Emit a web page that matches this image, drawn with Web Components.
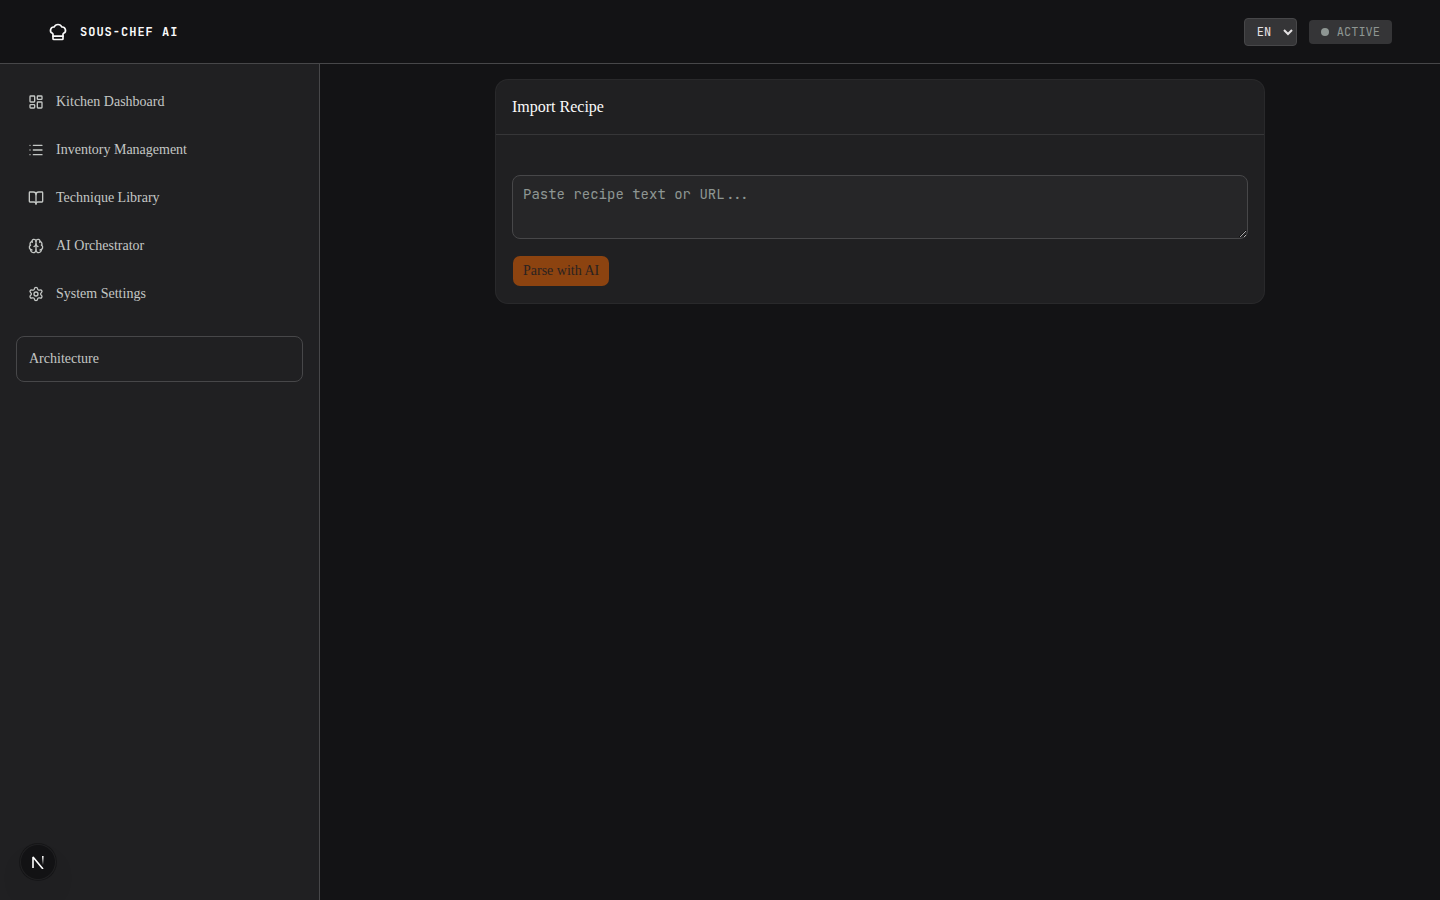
<!DOCTYPE html>
<html lang="en">
<head>
<meta charset="utf-8">
<meta name="viewport" content="width=device-width, initial-scale=1">
<title>Sous-Chef AI</title>
<style>
:root {
    --bg: #131315;
    --bg-panel: #202022;
    --bg-input: #262628;
    --bg-chip: #353537;
    --line: #474749;
    --line-soft: #363638;
    --ring: #29292b;
    --text: #fafafa;
    --text-soft: #e5e2e4;
    --text-secondary: #c4c7c5;
    --text-muted: #8e9693;
    --accent: #8c4310;
    --serif: "Liberation Serif", "Times New Roman", serif;
    --mono: "JetBrains Mono", "DejaVu Sans Mono", monospace;
    color-scheme: dark;
}
body {
    margin: 0;
    background: var(--bg);
    color: var(--text);
    font: 14px/20px var(--serif);
}
</style>
</head>
<body>
<chef-app>
    <chef-topbar slot="top">
        <chef-icon slot="logo" name="chef"></chef-icon>
        Sous-Chef AI
        <chef-lang slot="actions"></chef-lang>
        <chef-status slot="actions">Active</chef-status>
    </chef-topbar>
    <chef-sidebar slot="side">
        <chef-nav-item icon="dashboard">Kitchen Dashboard</chef-nav-item>
        <chef-nav-item icon="list">Inventory Management</chef-nav-item>
        <chef-nav-item icon="book">Technique Library</chef-nav-item>
        <chef-nav-item icon="brain">AI Orchestrator</chef-nav-item>
        <chef-nav-item icon="settings">System Settings</chef-nav-item>
        <chef-nav-item slot="extra" boxed>Architecture</chef-nav-item>
    </chef-sidebar>
    <chef-card>
        <span slot="title">Import Recipe</span>
        <chef-import-form></chef-import-form>
    </chef-card>
</chef-app>
<chef-dev-badge></chef-dev-badge>

<script>
const ICONS = {
    chef: '<path d="M17 21a1 1 0 0 0 1-1v-5.35c0-.457.316-.844.727-1.041a4 4 0 0 0-2.134-7.589 5 5 0 0 0-9.186 0 4 4 0 0 0-2.134 7.588c.411.198.727.585.727 1.041V20a1 1 0 0 0 1 1Z"/><path d="M6 17h12"/>',
    dashboard: '<rect width="7" height="9" x="3" y="3" rx="1"/><rect width="7" height="5" x="14" y="3" rx="1"/><rect width="7" height="9" x="14" y="12" rx="1"/><rect width="7" height="5" x="3" y="16" rx="1"/>',
    list: '<path d="M3 5h.01M3 12h.01M3 19h.01M8 5h13M8 12h13M8 19h13"/>',
    book: '<path d="M12 7v14"/><path d="M3 18a1 1 0 0 1-1-1V4a1 1 0 0 1 1-1h5a4 4 0 0 1 4 4 4 4 0 0 1 4-4h5a1 1 0 0 1 1 1v13a1 1 0 0 1-1 1h-6a3 3 0 0 0-3 3 3 3 0 0 0-3-3z"/>',
    brain: '<path d="M12 18V5"/><path d="M15 13a4.17 4.17 0 0 1-3-4 4.17 4.17 0 0 1-3 4"/><path d="M17.598 6.5A3 3 0 1 0 12 5a3 3 0 1 0-5.598 1.5"/><path d="M17.997 5.125a4 4 0 0 1 2.526 5.77"/><path d="M18 18a4 4 0 0 0 2-7.464"/><path d="M19.967 17.483A4 4 0 1 1 12 18a4 4 0 1 1-7.967-.517"/><path d="M6 18a4 4 0 0 1-2-7.464"/><path d="M6.003 5.125a4 4 0 0 0-2.526 5.77"/>',
    settings: '<path d="M9.671 4.136a2.34 2.34 0 0 1 4.659 0 2.34 2.34 0 0 0 3.319 1.915 2.34 2.34 0 0 1 2.33 4.033 2.34 2.34 0 0 0 0 3.831 2.34 2.34 0 0 1-2.33 4.033 2.34 2.34 0 0 0-3.319 1.915 2.34 2.34 0 0 1-4.659 0 2.34 2.34 0 0 0-3.32-1.915 2.34 2.34 0 0 1-2.33-4.033 2.34 2.34 0 0 0 0-3.831A2.34 2.34 0 0 1 6.35 6.051a2.34 2.34 0 0 0 3.319-1.915"/><circle cx="12" cy="12" r="3"/>'
};

// Shared base: renders the class template once into an open shadow root
class ChefElement extends HTMLElement {
    constructor() {
        super();
        this.attachShadow({ mode: 'open' });
    }

    connectedCallback() {
        if (this.shadowRoot.firstElementChild) return;
        this.shadowRoot.innerHTML = this.template();
    }
}

class ChefIcon extends ChefElement {
    template() {
        return `
<style>
:host { display: block; flex: none; width: 16px; height: 16px; }
svg { display: block; width: 100%; height: 100%; }
</style>
<svg viewBox="0 0 24 24" fill="none" stroke="currentColor" stroke-width="2" stroke-linecap="round" stroke-linejoin="round" aria-hidden="true">${ICONS[this.getAttribute('name')] || ''}</svg>
`;
    }
}

class ChefApp extends ChefElement {
    template() {
        return `
<style>
:host { display: flex; flex-direction: column; min-height: 100vh; }
.body { display: flex; flex: 1; }
main { flex: 1; min-width: 0; padding: 16px; }
</style>
<slot name="top"></slot>
<div class="body">
  <slot name="side"></slot>
  <main><slot></slot></main>
</div>
`;
    }
}

class ChefTopbar extends ChefElement {
    template() {
        return `
<style>
:host { display: block; border-bottom: 1px solid var(--line); }
header { display: flex; align-items: center; justify-content: space-between; padding: 0 48px; min-height: 63px; }
.brand, .actions { display: flex; align-items: center; gap: 12px; }
.name { font: 700 12px/16px var(--mono); letter-spacing: 1px; text-transform: uppercase; }
::slotted([slot="logo"]) { width: 20px; height: 20px; }
</style>
<header>
  <div class="brand">
    <slot name="logo"></slot>
    <div class="name"><slot></slot></div>
  </div>
  <div class="actions"><slot name="actions"></slot></div>
</header>
`;
    }
}

class ChefLang extends ChefElement {
    template() {
        return `
<style>
:host { display: block; }
select {
    display: block;
    height: 28px;
    padding: 4px 8px;
    border: 1px solid var(--line);
    border-radius: 4px;
    background: var(--bg-chip);
    color: var(--text-soft);
    font: 12px/16px var(--mono);
}
</style>
<select aria-label="Language">
  <option>EN</option>
</select>
`;
    }
}

class ChefStatus extends ChefElement {
    template() {
        return `
<style>
:host {
    display: flex;
    align-items: center;
    gap: 8px;
    padding: 4px 12px;
    border-radius: 4px;
    background: var(--bg-chip);
    color: var(--text-muted);
    font: 12px/16px var(--mono);
    text-transform: uppercase;
}
.dot { width: 8px; height: 8px; border-radius: 50%; background: currentColor; }
</style>
<span class="dot"></span>
<span><slot></slot></span>
`;
    }
}

class ChefSidebar extends ChefElement {
    template() {
        return `
<style>
:host {
    display: block;
    box-sizing: border-box;
    flex: none;
    width: 320px;
    padding: 16px;
    border-right: 1px solid var(--line);
    background: var(--bg-panel);
}
nav { display: flex; flex-direction: column; gap: 20px; }
.list { display: flex; flex-direction: column; gap: 4px; }
</style>
<nav>
  <div class="list"><slot></slot></div>
  <slot name="extra"></slot>
</nav>
`;
    }
}

class ChefNavItem extends ChefElement {
    template() {
        const icon = this.getAttribute('icon');
        return `
<style>
:host { display: block; }
a {
    display: flex;
    align-items: center;
    gap: 12px;
    padding: 12px;
    border-radius: 8px;
    color: var(--text-secondary);
    text-decoration: none;
}
:host([boxed]) a { border: 1px solid var(--line); }
</style>
<a href="#">${icon ? `<chef-icon name="${icon}"></chef-icon>` : ''}<span><slot></slot></span></a>
`;
    }
}

class ChefCard extends ChefElement {
    template() {
        return `
<style>
:host {
    display: block;
    max-width: 768px;
    margin: 0 auto;
    border-radius: 12px;
    background: var(--bg-panel);
    box-shadow: 0 0 0 1px var(--ring);
}
h2 { margin: 0; padding: 16px; border-bottom: 1px solid var(--line-soft); font-size: 16px; font-weight: 400; line-height: 22px; }
.content { padding: 40px 16px 16px; }
</style>
<section>
  <h2><slot name="title"></slot></h2>
  <div class="content"><slot></slot></div>
</section>
`;
    }
}

class ChefImportForm extends ChefElement {
    template() {
        return `
<style>
:host { display: block; }
form { display: flex; flex-direction: column; align-items: flex-start; gap: 16px; }
textarea {
    box-sizing: border-box;
    width: 100%;
    height: 64px;
    padding: 8px 10px;
    border: 1px solid var(--line);
    border-radius: 8px;
    background: var(--bg-input);
    color: var(--text);
    font: 14px/20px var(--mono);
}
textarea::placeholder { color: var(--text-muted); }
button {
    height: 32px;
    padding: 0 10px;
    border: 1px solid transparent;
    border-radius: 8px;
    background: var(--accent);
    background-clip: padding-box;
    color: #2a2220;
    font: 14px/20px var(--serif);
}
</style>
<form>
  <textarea aria-label="Recipe" placeholder="Paste recipe text or URL..."></textarea>
  <button type="button" disabled>Parse with AI</button>
</form>
`;
    }
}

// Round dev tools button that floats over the bottom left corner
class ChefDevBadge extends ChefElement {
    template() {
        return `
<style>
:host { display: block; position: fixed; left: 20px; bottom: 20px; }
button {
    display: grid;
    place-items: center;
    width: 36px;
    height: 36px;
    padding: 0;
    border: 0;
    border-radius: 50%;
    background: #121214;
    box-shadow: inset 0 0 0 1px #202022, 0 0 0 1px #161618, 0 16px 32px -8px #00000029;
    color: #fff;
}
svg { display: block; }
</style>
<button type="button" aria-label="Open dev tools">
  <svg width="14" height="14" viewBox="0 0 14 14" fill="none" stroke-width="2">
    <defs><linearGradient id="fade" x1="0" y1="0" x2="0" y2="1"><stop offset="0" stop-color="#fff"/><stop offset="1" stop-color="#fff" stop-opacity="0"/></linearGradient></defs>
    <path d="M2 13V2L12 14" stroke="#fff" stroke-width="1.6" stroke-linejoin="bevel"/>
    <rect x="11" y="1" width="1.6" height="9" fill="url(#fade)"/>
  </svg>
</button>
`;
    }
}

customElements.define('chef-icon', ChefIcon);
customElements.define('chef-app', ChefApp);
customElements.define('chef-topbar', ChefTopbar);
customElements.define('chef-lang', ChefLang);
customElements.define('chef-status', ChefStatus);
customElements.define('chef-sidebar', ChefSidebar);
customElements.define('chef-nav-item', ChefNavItem);
customElements.define('chef-card', ChefCard);
customElements.define('chef-import-form', ChefImportForm);
customElements.define('chef-dev-badge', ChefDevBadge);
</script>
</body>
</html>
